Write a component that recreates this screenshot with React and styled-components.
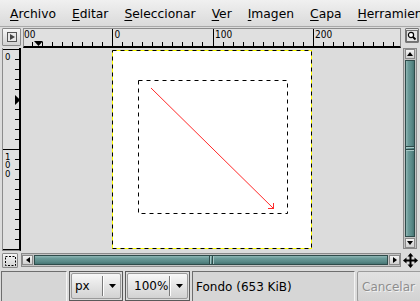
import React from 'react';
import styled, {createGlobalStyle} from 'styled-components';

const GlobalStyle = createGlobalStyle`
  html, body {
    margin: 0;
    padding: 0;
    background: #dcdcdc;
  }
  body {
    font-family: "DejaVu Sans", "Liberation Sans", sans-serif;
    font-size: 12px;
    color: #000;
  }
`;

const RULER_FONT = '"DejaVu Sans Condensed", "DejaVu Sans", sans-serif';

// horizontal ruler: image x=0 sits at page x 112
const hPos = u => Math.round(88 + u * 1.005) + 0.5;
// vertical ruler: image y=0 sits at page y 49
const vPos = u => 1 + u + 0.5;

const menuItems = ['Archivo', 'Editar', 'Seleccionar', 'Ver', 'Imagen', 'Capa', 'Herramientas'];

function HRulerMarks() {
  const lines = [];
  for (let u = -110; u <= 300; u += 10) {
    const x = hPos(u);
    if (u % 100 === 0) {
      lines.push(<line key={u} x1={x} y1={0} x2={x} y2={17}/>);
    } else {
      lines.push(<line key={u} x1={x} y1={13} x2={x} y2={17}/>);
    }
  }
  return (
    <svg width="376" height="17" style={{display: 'block'}}>
      <g stroke="#000" strokeWidth="1">{lines}</g>
      <g fontFamily={RULER_FONT} fontSize="10" fontStretch="condensed" fill="#000">
        <text x={hPos(-100) + 2.5} y="9">-100</text>
        <text x={hPos(0) + 2} y="9">0</text>
        <text x={hPos(100) + 1.5} y="9">100</text>
        <text x={hPos(200) + 1.5} y="9">200</text>
      </g>
      <polygon points="10,12 19,12 14.5,17" fill="#000"/>
    </svg>
  );
}

function VRulerMarks() {
  const lines = [];
  for (let u = 0; u <= 200; u += 10) {
    const y = vPos(u);
    if (u % 100 === 0) {
      lines.push(<line key={u} x1={0} y1={y} x2={16} y2={y}/>);
    } else {
      lines.push(<line key={u} x1={12} y1={y} x2={16} y2={y}/>);
    }
  }
  const label = (value, u) =>
    String(value).split('').map((d, i) => (
      <text key={`${u}-${i}`} x="2" y={vPos(u) + 10 + i * 8.5}>{d}</text>
    ));
  return (
    <svg width="16" height="203" style={{display: 'block'}}>
      <g stroke="#000" strokeWidth="1">{lines}</g>
      <g fontFamily={RULER_FONT} fontSize="9.5" fontStretch="condensed" fill="#000">
        {label(0, 0)}
        {label(100, 100)}
      </g>
      <polygon points="12,47 17.5,52 12,57" fill="#000"/>
    </svg>
  );
}

function CanvasDrawing() {
  return (
    <svg width="379" height="203" style={{display: 'block'}}>
      <rect x="89" y="2" width="200" height="199" fill="#fff"/>
      {/* layer boundary */}
      <rect x="89.5" y="2.5" width="199" height="198" fill="none" stroke="#ffff00"/>
      <rect x="89.5" y="2.5" width="199" height="198" fill="none" stroke="#000" strokeDasharray="4 4"/>
      {/* selection */}
      <rect x="115.5" y="32.5" width="149" height="133" fill="none" stroke="#000" strokeDasharray="4 4"/>
      {/* the arrow */}
      <g stroke="#ff2a2a" strokeWidth="1" fill="none">
        <line x1="128" y1="40" x2="250.5" y2="160.5"/>
        <line x1="245" y1="160.5" x2="251" y2="160.5"/>
        <line x1="250.5" y1="155" x2="250.5" y2="161"/>
      </g>
    </svg>
  );
}

function App() {
  return (
    <Window>
      <GlobalStyle/>
      <MenuBar>
        {menuItems.map(item => (
          <MenuItem key={item}>
            <Mnemonic>{item[0]}</Mnemonic>{item.slice(1)}
          </MenuItem>
        ))}
      </MenuBar>

      <Workspace>
        <TopRow>
          <CornerButton>
            <svg width="10" height="10" viewBox="0 0 10 10">
              <rect x="0.5" y="0.5" width="9" height="9" fill="#e8e8e8" stroke="#555"/>
              <polygon points="3,2 8,5 3,8" fill="#444"/>
            </svg>
          </CornerButton>
          <HRuler>
            <HRulerMarks/>
          </HRuler>
          <ZoomButton>
            <svg width="12" height="12" viewBox="0 0 12 12">
              <rect x="0.5" y="0.5" width="11" height="11" fill="none" stroke="#000" strokeDasharray="1 1"/>
              <circle cx="5" cy="5" r="2.6" fill="#fff" stroke="#000" strokeWidth="1.2"/>
              <line x1="7" y1="7" x2="9.5" y2="9.5" stroke="#000" strokeWidth="1.8"/>
            </svg>
          </ZoomButton>
        </TopRow>

        <MiddleRow>
          <VRuler>
            <VRulerMarks/>
          </VRuler>
          <Canvas>
            <CanvasDrawing/>
          </Canvas>
          <VScroll>
            <StepButton $h>
              <svg width="6" height="4"><polygon points="0,4 3,0 6,4" fill="#000"/></svg>
            </StepButton>
            <VThumb><VGrip/></VThumb>
            <StepButton $h>
              <svg width="6" height="4"><polygon points="0,0 6,0 3,4" fill="#000"/></svg>
            </StepButton>
          </VScroll>
        </MiddleRow>

        <BottomRow>
          <NavButton>
            <svg width="11" height="10" viewBox="0 0 11 10">
              <rect x="0.5" y="0.5" width="10" height="9" fill="none" stroke="#000" strokeDasharray="2 1.5"/>
            </svg>
          </NavButton>
          <HScroll>
            <StepButton>
              <svg width="4" height="6"><polygon points="4,0 0,3 4,6" fill="#000"/></svg>
            </StepButton>
            <HThumb><HGrip/></HThumb>
            <StepButton>
              <svg width="4" height="6"><polygon points="0,0 4,3 0,6" fill="#000"/></svg>
            </StepButton>
          </HScroll>
          <MoveIcon>
            <svg width="15" height="15" viewBox="0 0 15 15">
              <g fill="#000">
                <rect x="6.5" y="3" width="2" height="9"/>
                <rect x="3" y="6.5" width="9" height="2"/>
                <polygon points="7.5,0 10.5,3.5 4.5,3.5"/>
                <polygon points="7.5,15 10.5,11.5 4.5,11.5"/>
                <polygon points="0,7.5 3.5,4.5 3.5,10.5"/>
                <polygon points="15,7.5 11.5,4.5 11.5,10.5"/>
              </g>
            </svg>
          </MoveIcon>
        </BottomRow>
      </Workspace>

      <StatusBar>
        <Sunken $w={66}/>
        <ComboFrame $w={54}>
          <ComboButton>
            <ComboLabel $pad={3}>px</ComboLabel>
            <ComboSep/>
            <ComboArrow>
              <svg width="7" height="4"><polygon points="0,0 7,0 3.5,4" fill="#000"/></svg>
            </ComboArrow>
          </ComboButton>
        </ComboFrame>
        <ComboFrame $w={65}>
          <ComboButton>
            <ComboLabel $pad={6}>100%</ComboLabel>
            <ComboSep/>
            <ComboArrow>
              <svg width="7" height="4"><polygon points="0,0 7,0 3.5,4" fill="#000"/></svg>
            </ComboArrow>
          </ComboButton>
        </ComboFrame>
        <Sunken $w={163}>
          <StatusText>Fondo (653 KiB)</StatusText>
        </Sunken>
        <CancelButton disabled>Cancelar</CancelButton>
      </StatusBar>
    </Window>
  );
}

export default App;

const Window = styled.div`
  width: 420px;
  height: 301px;
  overflow: hidden;
  background: #dcdcdc;
  display: flex;
  flex-direction: column;
`;

const MenuBar = styled.div`
  flex: none;
  height: 27px;
  box-sizing: border-box;
  display: flex;
  padding: 1px 0 0 2px;
  background: linear-gradient(#f0f0f0, #dadada);
  border-bottom: 1px solid #a8a8a8;
  white-space: nowrap;
  overflow: hidden;
`;

const MenuItem = styled.span`
  padding: 0 8px;
  font-size: 12.3px;
  line-height: 26px;
`;

const Mnemonic = styled.span`
  text-decoration: underline;
  text-underline-offset: 2px;
`;

const Workspace = styled.div`
  display: flex;
  flex-direction: column;
  padding-top: 1px;
`;

const TopRow = styled.div`
  display: flex;
  height: 20px;
`;

const MiddleRow = styled.div`
  display: flex;
  height: 203px;
`;

const BottomRow = styled.div`
  display: flex;
  align-items: flex-start;
  height: 15px;
  margin-top: 1px;
`;

const ToolButton = styled.div`
  box-sizing: border-box;
  display: flex;
  align-items: center;
  justify-content: center;
  background: linear-gradient(#f6f6f6, #d2d2d2);
  border: 1px solid #8a8a8a;
  border-radius: 1px;
`;

const CornerButton = styled(ToolButton)`
  margin-left: 2px;
  width: 19px;
  height: 18px;
`;

const ZoomButton = styled(ToolButton)`
  margin-left: 4px;
  width: 14px;
  height: 15px;
  background: #e4e4e4;
  border-color: #777;
`;

const NavButton = styled(ToolButton)`
  margin: 1px 0 0 2px;
  width: 16px;
  height: 15px;
`;

const HRuler = styled.div`
  box-sizing: border-box;
  margin-left: 2px;
  width: 378px;
  height: 20px;
  background: #e0e0e0;
  border: 1px solid #8c8c8c;
  border-bottom: 2px solid #000;
  overflow: hidden;
`;

const VRuler = styled.div`
  box-sizing: border-box;
  margin-left: 2px;
  width: 19px;
  height: 203px;
  background: #e0e0e0;
  border-left: 1px solid #8c8c8c;
  border-right: 2px solid #000;
  border-bottom: 1px solid #8c8c8c;
  overflow: hidden;
`;

const Canvas = styled.div`
  margin-left: 2px;
  width: 379px;
  height: 203px;
  background: #dcdcdc;
  overflow: hidden;
`;

const VScroll = styled.div`
  box-sizing: border-box;
  margin-left: 1px;
  width: 14px;
  height: 201px;
  display: flex;
  flex-direction: column;
  gap: 1px;
  padding: 0 1px;
  background: #c4c4c4;
  border: 1px solid #8a8a8a;
`;

const HScroll = styled.div`
  box-sizing: border-box;
  margin: 1px 0 0 3px;
  width: 380px;
  height: 14px;
  display: flex;
  gap: 1px;
  padding: 1px 0;
  background: #c4c4c4;
  border: 1px solid #8a8a8a;
`;

const StepButton = styled.div`
  flex: none;
  box-sizing: border-box;
  display: flex;
  align-items: center;
  justify-content: center;
  width: ${p => (p.$h ? 'auto' : '11px')};
  height: ${p => (p.$h ? '10px' : 'auto')};
  background: linear-gradient(#f4f4f4, #d0d0d0);
  border: 1px solid #8a8a8a;
`;

const Thumb = styled.div`
  flex: 1;
  box-sizing: border-box;
  display: flex;
  align-items: center;
  justify-content: center;
  border: 1px solid #2e4b4a;
`;

const VThumb = styled(Thumb)`
  background: linear-gradient(to right, #8fb6b4, #6a9a98 30%, #5a8a88 70%, #477574);
`;

const HThumb = styled(Thumb)`
  background: linear-gradient(#8fb6b4, #6a9a98 30%, #5a8a88 70%, #477574);
`;

const VGrip = styled.div`
  width: 100%;
  height: 5px;
  background: linear-gradient(#2e4b4a 0 1px, #a6c8c6 1px 2px, transparent 2px 3px, #2e4b4a 3px 4px, #a6c8c6 4px 5px);
`;

const HGrip = styled.div`
  width: 5px;
  height: 100%;
  background: linear-gradient(to right, #2e4b4a 0 1px, #a6c8c6 1px 2px, transparent 2px 3px, #2e4b4a 3px 4px, #a6c8c6 4px 5px);
`;

const MoveIcon = styled.div`
  margin: 1px 0 0 2px;
  width: 15px;
  height: 15px;
`;

const StatusBar = styled.div`
  display: flex;
  gap: 2px;
  height: 30px;
  margin-top: 4px;
  padding-left: 1px;
`;

const Sunken = styled.div`
  flex: none;
  box-sizing: border-box;
  width: ${p => p.$w}px;
  height: 31px;
  display: flex;
  align-items: center;
  background: #d6d6d6;
  border: 1px solid #6e6e6e;
  border-right-color: #f4f4f4;
  border-bottom-color: #f4f4f4;
`;

const StatusText = styled.span`
  padding-left: 3px;
  font-size: 12px;
  white-space: nowrap;
`;

const ComboFrame = styled.div`
  flex: none;
  box-sizing: border-box;
  width: ${p => p.$w}px;
  height: 30px;
  padding: 1px;
  background: #dcdcdc;
  border: 1px solid #5a5a5a;
`;

const ComboButton = styled.div`
  box-sizing: border-box;
  height: 100%;
  display: flex;
  align-items: center;
  background: linear-gradient(#f7f7f7, #d2d2d2);
  border: 1px solid #9a9a9a;
  border-radius: 2px;
`;

const ComboLabel = styled.span`
  flex: 1;
  padding-left: ${p => p.$pad}px;
  font-size: 12px;
  white-space: nowrap;
`;

const ComboSep = styled.span`
  width: 1px;
  height: 20px;
  background: #7a7a7a;
  border-right: 1px solid #fff;
`;

const ComboArrow = styled.span`
  width: 16px;
  display: flex;
  justify-content: center;
`;

const CancelButton = styled.button`
  flex: none;
  box-sizing: border-box;
  width: 66px;
  height: 31px;
  margin: 0;
  padding: 0 0 0 4px;
  text-align: left;
  font-family: "DejaVu Sans", "Liberation Sans", sans-serif;
  font-size: 12px;
  color: #8e8e8e;
  text-shadow: 1px 1px 0 #f2f2f2;
  background: linear-gradient(#e2e2e2, #d2d2d2);
  border: 1px solid #9c9c9c;
  border-radius: 2px;
`;
